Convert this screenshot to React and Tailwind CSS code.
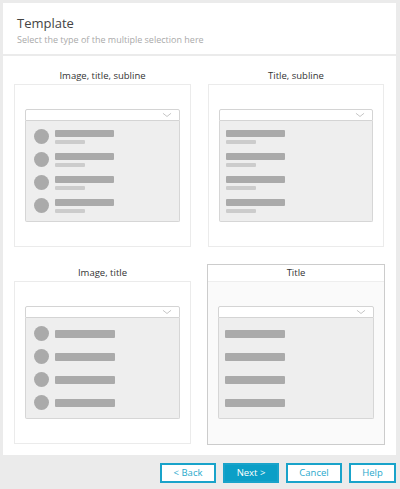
import { ChevronDown } from 'lucide-react'

const options = [
  { id: 'its', label: 'Image, title, subline', image: true, subline: true },
  { id: 'ts', label: 'Title, subline', image: false, subline: true },
  { id: 'it', label: 'Image, title', image: true, subline: false },
  { id: 't', label: 'Title', image: false, subline: false },
]

function Row({ image, subline }) {
  return (
    <div className="flex items-center h-[15px]">
      {image && <div className="w-[15px] h-[15px] rounded-full bg-[#aaaaaa] mr-[6px] shrink-0" />}
      {subline ? (
        <div className="flex flex-col self-start pt-px">
          <div className="w-[59px] h-[7px] rounded-[1px] bg-[#aaaaaa]" />
          <div className="w-[30px] h-[4px] mt-[3px] rounded-[1px] bg-[#cccccc]" />
        </div>
      ) : (
        <div className="w-[60px] h-[8px] rounded-[1px] bg-[#aaaaaa]" />
      )}
    </div>
  )
}

function Preview({ image, subline }) {
  return (
    <div className="mx-[10px]">
      <div className="h-[12px] bg-white border border-[#d4d4d4] rounded-t-[2px] flex items-center justify-end pr-[6px]">
        <ChevronDown size={12} strokeWidth={1} className="text-[#999] scale-x-125" />
      </div>
      <div
        className={`h-[101px] bg-[#eeeeee] border border-t-0 border-[#d6d6d6] rounded-b-[2px] flex flex-col gap-[8px] pt-[8px] ${
          image ? 'pl-[8px]' : 'pl-[6px]'
        }`}
      >
        {[0, 1, 2, 3].map((i) => (
          <Row key={i} image={image} subline={subline} />
        ))}
      </div>
    </div>
  )
}

export default function App() {
  const selected = 't'
  return (
    <div
      className="w-[400px] h-[489px] bg-[#ebebeb] pt-[3px] pl-[3px] pr-[4px]"
      style={{ fontFamily: '"Open Sans", "Noto Sans", sans-serif' }}
    >
      <div className="bg-white h-[452px] flex flex-col">
        {/* En-tête */}
        <div className="h-[53px] px-[14px] pt-[12px] border-b-2 border-[#ebebeb]">
          <div className="text-[13px] leading-[17px] text-[#444]">Template</div>
          <div className="text-[9px] leading-[13px] mt-px text-[#aaa]">
            Select the type of the multiple selection here
          </div>
        </div>

        {/* Grille des modèles */}
        <div className="grid grid-cols-[179px_178px] gap-x-[15px] gap-y-[16px] pt-[11px] pl-[10px]">
          {options.map((o) => {
            const actif = o.id === selected
            return (
              <div
                key={o.id}
                className={`h-[181px] flex flex-col border ${actif ? 'border-[#cccccc]' : 'border-transparent'}`}
              >
                <div className="h-[16px] text-center text-[9.5px] leading-[16px] text-[#333]">{o.label}</div>
                <div
                  className={`flex-1 pt-[24px] ${
                    actif ? 'border-t border-[#eeeeee] bg-[#fafafa]' : 'border border-[#ebebeb] bg-white'
                  }`}
                >
                  <Preview image={o.image} subline={o.subline} />
                </div>
              </div>
            )
          })}
        </div>
      </div>

      {/* Boutons */}
      <div className="flex justify-end gap-[7px] pt-[8px]">
        {['< Back', 'Next >', 'Cancel', 'Help'].map((b) => (
          <button
            key={b}
            type="button"
            className={`h-[20px] border-2 border-[#19a3ca] text-[9.5px] leading-none ${
              b === 'Help' ? 'w-[47px]' : 'w-[56px]'
            } ${b === 'Next >' ? 'bg-[#0b9fc7] text-white' : 'bg-white text-[#28a9cc]'}`}
          >
            {b}
          </button>
        ))}
      </div>
    </div>
  )
}
